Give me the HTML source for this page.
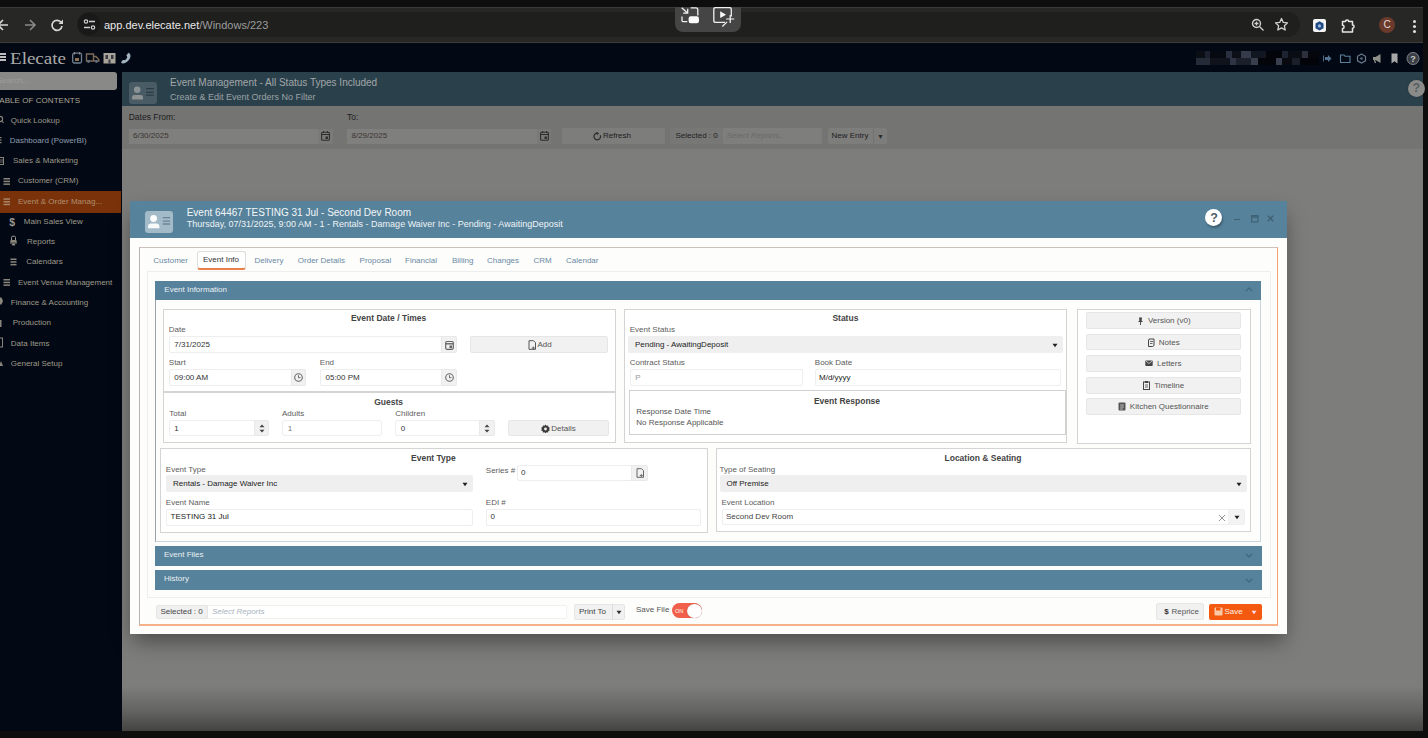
<!DOCTYPE html>
<html><head><meta charset="utf-8">
<style>
*{box-sizing:border-box;margin:0;padding:0}
html,body{width:1428px;height:738px;overflow:hidden;background:#0e0e0e;font-family:"Liberation Sans",sans-serif}
.a{position:absolute}
.t{position:absolute;white-space:nowrap;line-height:1}
/* browser */
#tb{left:0;top:7px;width:1423px;height:36px;background:#272725;border-top:1px solid #3a3a38;border-bottom:1px solid #3d3d38}
#pill{left:77px;top:4px;width:1223px;height:25px;border-radius:13px;background:#1f1f1e}
/* app */
#nav{left:0;top:43px;width:1423px;height:29px;background:#020914}
#side{left:0;top:72px;width:122px;height:659px;background:#020914}
#main{left:122px;top:72px;width:1301px;height:659px;background:linear-gradient(180deg,#7d7d7b 0,#7d7d7b 614px,#626261 640px,#434342 659px)}
#mh{left:0;top:0;width:1301px;height:34px;background:#2a414c}
#fb{left:0;top:34px;width:1301px;height:43px;background:#747473}
.side-i{position:absolute;font-size:8px;color:#9f998b;white-space:nowrap;line-height:1}
/* modal */
#modal{left:130px;top:201px;width:1156px;height:433px;background:#fdfdfc;box-shadow:0 4px 14px rgba(0,0,0,.35)}
#mhd{left:0;top:0;width:1156px;height:37px;background:#5a87a0}
.box{position:absolute;border:1px solid #dcdcdc;background:#fff}
.lbl{position:absolute;font-size:8px;color:#555;white-space:nowrap;line-height:1}
.inp{position:absolute;border:1px solid #e6e6e6;background:#fff;font-size:8px;color:#222;line-height:1}
.sel{position:absolute;background:#efefef;border-radius:2px;font-size:8px;color:#222;line-height:1}
.btn{position:absolute;background:#efefef;border:1px solid #e8e8e8;border-radius:2px;font-size:8px;color:#444;text-align:center;line-height:1}
.ttl{position:absolute;font-size:8.5px;font-weight:bold;color:#444;white-space:nowrap;line-height:1}
.shd{position:absolute;background:#5a87a0;color:#eef3f6;font-size:8px;line-height:1}
</style></head><body>
<div class="a" id="tb">
  <svg class="a" style="left:0;top:5px" width="70" height="24" viewBox="0 0 70 24">
    <path d="M8 12H-1M3 7l-5 5 5 5" stroke="#d6d6d6" stroke-width="1.6" fill="none"/>
    <path d="M25 12h9M30 7l5 5-5 5" stroke="#8a8a8a" stroke-width="1.6" fill="none"/>
    <path d="M61.2 9.5A5 5 0 1 0 62 13" stroke="#d6d6d6" stroke-width="1.7" fill="none"/>
    <path d="M63 6.5v4.5h-4.5z" fill="#d6d6d6"/>
  </svg>
  <div class="a" id="pill">
    <div class="a" style="left:1px;top:1px;width:22px;height:22px;border-radius:11px;background:#191919"></div>
    <svg class="a" style="left:6px;top:6px" width="13" height="13" viewBox="0 0 13 13">
      <circle cx="3" cy="3.5" r="1.7" stroke="#d0d0d0" stroke-width="1.2" fill="none"/>
      <path d="M6 3.5h6M1 9.5h6" stroke="#d0d0d0" stroke-width="1.3"/>
      <circle cx="10" cy="9.5" r="1.7" stroke="#d0d0d0" stroke-width="1.2" fill="none"/>
    </svg>
    <div class="t" style="left:27px;top:8px;font-size:11px;color:#e9e9e9">app.dev.elecate.net<span style="color:#9c9c9c">/Windows/223</span></div>
    <svg class="a" style="left:1174px;top:6px" width="14" height="14" viewBox="0 0 14 14"><circle cx="5.5" cy="5.5" r="4" stroke="#cfcfcf" stroke-width="1.4" fill="none"/><path d="M8.5 8.5l4 4M3.5 5.5h4M5.5 3.5v4" stroke="#cfcfcf" stroke-width="1.3"/></svg>
    <svg class="a" style="left:1197px;top:5px" width="15" height="15" viewBox="0 0 15 15"><path d="M7.5 1.5l1.8 3.9 4.2.5-3.1 2.9.8 4.2-3.7-2.1-3.7 2.1.8-4.2L1.5 5.9l4.2-.5z" stroke="#d2d2d2" stroke-width="1.3" fill="none" stroke-linejoin="round"/></svg>
  </div>
  <div class="a" style="left:1312.5px;top:11px;width:13px;height:13px;background:#f4f4f4;border-radius:2px"><svg class="a" style="left:2px;top:1.5px" width="9" height="10" viewBox="0 0 9 10"><path d="M4.5 0.3l4 2.3v4.6l-4 2.3-4-2.3V2.6z" fill="#1f4a86"/><circle cx="4.5" cy="4.9" r="1.6" fill="#9fb8dc"/></svg></div>
  <svg class="a" style="left:1340px;top:10px" width="16" height="16" viewBox="0 0 16 16"><path d="M2.5 3.5h3a1.6 1.6 0 0 1 3.2 0h3.8v3.5a1.6 1.6 0 0 1 0 3.2v3.8h-10v-3.5a1.6 1.6 0 0 0 0-3.2z" stroke="#e6e6e6" stroke-width="1.5" fill="none" stroke-linejoin="round"/></svg>
  <div class="a" style="left:1379px;top:9px;width:16px;height:16px;border-radius:8px;background:#6a3a2c;color:#e8dcd6;font-size:10px;text-align:center;line-height:16px">C</div>
  <div class="a" style="left:1412.5px;top:12px;width:3px;height:3px;border-radius:2px;background:#e0e0e0;box-shadow:0 5px 0 #e0e0e0,0 10px 0 #e0e0e0"></div>
</div>
<div class="a" style="left:675px;top:6.5px;width:66px;height:25.5px;background:#454545;border-radius:0 0 8px 8px">
  <svg class="a" style="left:0;top:0" width="66" height="25" viewBox="0 0 66 25">
    <path d="M6.7 0.8L12.5 6M8.2 6.2h4.5V1.8" stroke="#f0f0f0" stroke-width="1.3" fill="none"/>
    <path d="M15.7 0.8h5.3q1.8 0 1.8 1.8v6" stroke="#f0f0f0" stroke-width="1.3" fill="none"/>
    <path d="M7 9.6v4.2q0 .8.8.8h4.5" stroke="#f0f0f0" stroke-width="1.3" fill="none"/>
    <rect x="13.6" y="9.2" width="10.4" height="7" rx="2.2" fill="#fafafa"/>
    <path d="M50 15.4h-9.2q-2 0-2-2V2.5q0-2 2-2h13.5q2 0 2 2v7" stroke="#f0f0f0" stroke-width="1.3" fill="none"/>
    <path d="M45.2 4.3v6.8l5.8-3.4z" fill="#fafafa"/>
    <path d="M55.2 8v8M51.2 12h8" stroke="#fafafa" stroke-width="1.2"/>
    <path d="M47.3 19.5l4.8-4.6" stroke="#f0f0f0" stroke-width="1.2"/>
  </svg>
</div>
<div class="a" id="nav">
  <div class="a" style="left:0;top:10px;width:6px;height:1.6px;background:#bdbdbd;box-shadow:0 3px 0 #bdbdbd,0 6px 0 #bdbdbd"></div>
  <div class="t" style="left:10px;top:8.2px;font-family:'Liberation Serif',serif;font-size:16px;color:#aaaaa8;transform:scaleX(1.19);transform-origin:0 0">Elecate</div>
  <svg class="a" style="left:72px;top:8.5px" width="60" height="12" viewBox="0 0 60 12">
    <rect x="0.7" y="1.2" width="8.8" height="9.8" rx="1.5" stroke="#6f7f8f" stroke-width="1.3" fill="none"/><path d="M2.5 0v2.5M7.5 0v2.5" stroke="#8a8a8a" stroke-width="1.2"/><rect x="3" y="6" width="4" height="3" fill="#8a7050"/>
    <path d="M14.5 2h7v7h-7zM21.5 4.5h2.5l2.8 3v1.5h-5.3" stroke="#7d6a58" stroke-width="1.4" fill="none"/><circle cx="16.5" cy="9.5" r="1.4" fill="#607080"/><circle cx="24.5" cy="9.5" r="1.4" fill="#607080"/>
    <path d="M31.5 1h12v10.5h-12z" fill="#a9a39a"/><path d="M33.5 3h2.5v4h-2.5zM39 3h2.5v4H39zM36.5 7.5h2v4h-2z" fill="#3a3c44"/>
    <path d="M56.5 0.8c1.8.6 2.6 2.8 1.6 5.2-1.3 3-4.3 5.3-7 5.5-1.2.1-2.3-.7-1.8-1.7l1.4-1.6c.8-.5 1.6.1 2.2-.1.9-.5 2-1.9 2.3-2.9.2-.7-.7-1.2-.8-2z" fill="#a3b2c0"/>
  </svg>
  <div class="a" style="left:1196px;top:8px;width:123px;height:14px;background:
    linear-gradient(90deg,#0b0e14 0 9px,#1c2230 9px 14px,#070910 14px 30px,#2a3040 30px 36px,#0c0f16 36px 45px,#353b4a 45px 55px,#121620 55px 70px,#03050a 70px 86px,#1e2330 86px 92px,#0a0d14 92px 106px,#2b303c 106px 112px,#05070c 112px 123px)"></div>
  <div class="a" style="left:1196px;top:15px;width:123px;height:7px;background:
    linear-gradient(90deg,#262b38 0 14px,#10131b 14px 34px,#2e3444 34px 40px,#1a1f2a 40px 55px,#383e4c 55px 62px,#03050a 62px 80px,#3a4050 80px 86px,#080a10 86px 96px,#1a1e28 96px 104px,#02040a 104px 123px)"></div>
  <svg class="a" style="left:1322px;top:8px" width="101" height="15" viewBox="0 0 101 15">
    <path d="M3 6h3V4l3.5 3.5L6 11V9H3z" fill="#55738e"/><path d="M1.5 4.5v6" stroke="#4d6a84" stroke-width="1"/>
    <path d="M18.5 4h3.5l1 1.2h5v6.3h-9.5z" stroke="#5f7f9a" stroke-width="1.1" fill="none"/>
    <path d="M39.5 3l4 2.3v4.5l-4 2.3-4-2.3V5.3z" stroke="#66788a" stroke-width="1.2" fill="none"/><circle cx="39.5" cy="7.5" r="1.3" fill="#5a6a80"/>
    <path d="M51 6h2.5l5-3v9l-5-3H51z" fill="#8f8f8a"/><path d="M52.5 9l1 3" stroke="#8f8f8a" stroke-width="1.3"/>
    <path d="M69.5 2.5h6v10l-3-2.3-3 2.3z" fill="#a8a8a8"/>
    <circle cx="91" cy="7.5" r="6" fill="#3a3e44" stroke="#7f8288" stroke-width="1"/><text x="91" y="11" font-family="Liberation Sans" font-size="9" font-weight="bold" fill="#c8c8c8" text-anchor="middle">?</text>
  </svg>
</div>
<div class="a" id="side">
  <div class="a" style="left:-4px;top:0;width:120.5px;height:17.5px;background:#898987;border-radius:3px"></div>
  <div class="t" style="left:-3px;top:4.5px;font-size:8px;color:#9f9f9c">Search...</div>
  <div class="t" style="left:-5px;top:24.5px;font-size:8px;color:#aca594;letter-spacing:0.05px">TABLE OF CONTENTS</div>
  <div class="a" style="left:0;top:119px;width:121px;height:21.5px;background:#7a320b"></div>
  <div class="side-i" style="left:10.7px;top:44.5px">Quick Lookup</div>
  <div class="side-i" style="left:9.7px;top:64.5px;color:#8d9db0">Dashboard (PowerBI)</div>
  <div class="side-i" style="left:13px;top:85px">Sales &amp; Marketing</div>
  <div class="side-i" style="left:18px;top:105px">Customer (CRM)</div>
  <div class="side-i" style="left:18px;top:125.5px;color:#b08f6e">Event &amp; Order Manag...</div>
  <div class="side-i" style="left:23.8px;top:145.5px">Main Sales View</div>
  <div class="side-i" style="left:27px;top:166px">Reports</div>
  <div class="side-i" style="left:26.3px;top:186px">Calendars</div>
  <div class="side-i" style="left:18px;top:206.5px">Event Venue Management</div>
  <div class="side-i" style="left:10.8px;top:227px">Finance &amp; Accounting</div>
  <div class="side-i" style="left:12.7px;top:247px">Production</div>
  <div class="side-i" style="left:10.8px;top:267.5px">Data Items</div>
  <div class="side-i" style="left:10.8px;top:288px">General Setup</div>
  <svg class="a" style="left:0;top:40px" width="30" height="260" viewBox="0 0 30 260">
    <g fill="#8a867c">
    <circle cx="0" cy="7" r="2.6" fill="none" stroke="#8a867c" stroke-width="1.1"/><path d="M1.8 9l1.8 2" stroke="#8a867c" stroke-width="1.1"/>
    <rect x="-1" y="25" width="2.5" height="1.2"/><rect x="-1" y="27.5" width="2.5" height="1.2"/><rect x="-1" y="30" width="2.5" height="1.2"/>
    <rect x="-1" y="45.5" width="4.5" height="7" fill="none" stroke="#8a867c" stroke-width="1"/><path d="M0 48h3M0 50h3" stroke="#8a867c" stroke-width=".8"/>
    <rect x="3.5" y="66" width="6.5" height="1.5"/><rect x="3.5" y="68.7" width="6.5" height="1.5"/><rect x="3.5" y="71.4" width="6.5" height="1.5"/>
    <rect x="3.5" y="86.3" width="6.5" height="1.5" fill="#a88466"/><rect x="3.5" y="89" width="6.5" height="1.5" fill="#a88466"/><rect x="3.5" y="91.7" width="6.5" height="1.5" fill="#a88466"/>
    <text x="9.3" y="113.5" font-family="Liberation Sans" font-size="10.5" font-weight="bold" fill="#9a9890">$</text>
    <path d="M11.5 128v-2.5q0-1.3 1.3-1.3h1.4q1.3 0 1.3 1.3V128" fill="none" stroke="#9a9890" stroke-width="1"/><rect x="10.3" y="128" width="6.4" height="4" rx="1"/><rect x="11.8" y="131" width="3.4" height="2.8" fill="#9a9890" stroke="#020914" stroke-width=".6"/>
    <rect x="10.5" y="146.5" width="6" height="1.5"/><rect x="10.5" y="149.2" width="6" height="1.5"/><rect x="10.5" y="151.9" width="6" height="1.5"/>
    <rect x="3.5" y="167" width="6.5" height="1.5"/><rect x="3.5" y="169.7" width="6.5" height="1.5"/><rect x="3.5" y="172.4" width="6.5" height="1.5"/>
    <path d="M-1 185.5h2.5l1.5 3.5-1.5 3.5H-1z"/>
    <rect x="-1" y="208" width="2.5" height="7"/>
    <rect x="-1" y="226" width="3.5" height="9" fill="none" stroke="#8a867c" stroke-width="1"/>
    <path d="M-1 254l2-5 2 5z"/>
    </g>
  </svg>
</div>
<div class="a" id="main">
  <div class="a" id="mh">
    <div class="a" style="left:6.6px;top:9.9px;width:28px;height:21.8px;background:#495b65;border-radius:3px"></div>
    <svg class="a" style="left:8px;top:12px" width="26" height="18" viewBox="0 0 26 18"><circle cx="7.2" cy="5.7" r="3.3" fill="#8a9296"/><path d="M2 15.4v-2.2q0-2.3 2.3-2.3h6.4q2.3 0 2.3 2.3v2.2z" fill="#8e9392"/><path d="M16 4.7h7.7M16 8.3h7.7M16 11.1h7.7" stroke="#2b3b43" stroke-width="1.3"/></svg>
    <div class="t" style="left:48px;top:6.2px;font-size:10px;color:#a2a6a8">Event Management - All Status Types Included</div>
    <div class="t" style="left:48px;top:20.7px;font-size:9px;color:#9ca1a4">Create &amp; Edit Event Orders No Filter</div>
    <div class="a" style="left:1286px;top:8px;width:16.5px;height:16.5px;border-radius:9px;background:#8b8c8a;color:#565d62;font-size:12.5px;font-weight:bold;text-align:center;line-height:17px;box-shadow:0 0 2px rgba(0,0,0,.3)">?</div>
  </div>
  <div class="a" id="fb">
    <div class="t" style="left:6.7px;top:7.1px;font-size:8.5px;color:#1c1c1c">Dates From:</div>
    <div class="t" style="left:225px;top:7.1px;font-size:8.5px;color:#1c1c1c">To:</div>
    <div class="a" style="left:6.7px;top:22.5px;width:204px;height:15px;background:#7f7f7e"></div>
    <div class="t" style="left:11px;top:26px;font-size:8px;color:#3c3530">6/30/2025</div>
    <div class="a" style="left:196px;top:22.5px;width:14.5px;height:15px;background:#7a7a79"></div>
    <div class="a" style="left:225px;top:22.5px;width:204px;height:15px;background:#7f7f7e"></div>
    <div class="t" style="left:229.5px;top:26px;font-size:8px;color:#3c3530">8/29/2025</div>
    <div class="a" style="left:414.5px;top:22.5px;width:14.5px;height:15px;background:#7a7a79"></div>
    <svg class="a" style="left:199px;top:25px" width="9" height="10" viewBox="0 0 9 10"><rect x="0.6" y="1.2" width="7.8" height="8" rx="1" fill="none" stroke="#2e2e2e" stroke-width="1.1"/><path d="M0.6 3.5h7.8" stroke="#2e2e2e" stroke-width="1"/><path d="M2.5 0v2M6.5 0v2" stroke="#2e2e2e" stroke-width="1"/><rect x="4.5" y="5.5" width="2.5" height="2.5" fill="#2e2e2e"/></svg>
    <svg class="a" style="left:417.5px;top:25px" width="9" height="10" viewBox="0 0 9 10"><rect x="0.6" y="1.2" width="7.8" height="8" rx="1" fill="none" stroke="#2e2e2e" stroke-width="1.1"/><path d="M0.6 3.5h7.8" stroke="#2e2e2e" stroke-width="1"/><path d="M2.5 0v2M6.5 0v2" stroke="#2e2e2e" stroke-width="1"/><rect x="4.5" y="5.5" width="2.5" height="2.5" fill="#2e2e2e"/></svg>
    <div class="a" style="left:439.5px;top:22px;width:103.5px;height:15.5px;background:#7d7d7c;border-radius:2px"></div>
    <svg class="a" style="left:471px;top:25.5px" width="9" height="9" viewBox="0 0 9 9"><path d="M7.3 3.2A3.3 3.3 0 1 1 4.5 1.2" stroke="#2a2a2a" stroke-width="1.2" fill="none"/><path d="M3.5 0l2.5 1.3-2 2z" fill="#2a2a2a"/></svg>
    <div class="t" style="left:481px;top:26px;font-size:8px;color:#202020">Refresh</div>
    <div class="a" style="left:548px;top:22px;width:152px;height:15.5px;background:#7e7e7d;border-radius:2px"></div>
    <div class="a" style="left:548px;top:22px;width:52.5px;height:15.5px;background:#777776;border-radius:2px 0 0 2px"></div>
    <div class="t" style="left:553.5px;top:26px;font-size:8px;color:#222">Selected : 0</div>
    <div class="t" style="left:604.5px;top:26px;font-size:8px;color:#6a6a6a;font-style:italic">Select Reports...</div>
    <div class="a" style="left:706px;top:22px;width:59px;height:15.5px;background:#7d7d7c;border-radius:2px"></div>
    <div class="a" style="left:750.5px;top:22px;width:1px;height:15.5px;background:#727271"></div>
    <div class="t" style="left:709.5px;top:26px;font-size:8px;color:#202020">New Entry</div>
    <div class="t" style="left:755px;top:26.5px;font-size:7px;color:#2c2c2c">&#9660;</div>
  </div>
</div>
<!--MODAL-->
<div class="a" style="left:130px;top:200.6px;width:1156.5px;height:433.2px;background:#fdfdfc;box-shadow:0 10px 20px -3px rgba(0,0,0,.42)"></div>
<div class="a" style="left:130px;top:200.6px;width:1156.5px;height:37.4px;background:#56829b"></div>
<div class="a" style="left:145.2px;top:210.9px;width:28.2px;height:22.1px;background:#a3bac8;border-radius:3px"></div>
<svg class="a" style="left:146px;top:213px" width="26" height="18" viewBox="0 0 26 18"><circle cx="7.6" cy="5.5" r="3.4" fill="#fbfcfc"/><path d="M2 15.2v-1.6q0-3 3-3h5.4q3 0 3 3v1.6z" fill="#f6fafb"/><path d="M16.8 4.6h7.3M16.8 8.1h7.3M16.8 11h7.3" stroke="#6a8595" stroke-width="1.3"/></svg>
<div class="t" style="left:186.7px;top:207.53px;font-size:10px;color:#f4f7f9;">Event 64467 TESTING 31 Jul - Second Dev Room</div>
<div class="t" style="left:186.7px;top:219.98px;font-size:9px;color:#eef3f6;">Thursday, 07/31/2025, 9:00 AM - 1 - Rentals - Damage Waiver Inc - Pending - AwaitingDeposit</div>
<div class="a" style="left:1205.3px;top:209.3px;width:17.0px;height:17.0px;background:#fff;border-radius:50%;box-shadow:1px 2px 2px rgba(0,0,0,.3);color:#4d6f85;font-size:13px;font-weight:bold;text-align:center;line-height:17px"></div>
<div class="t" style="left:1210.2px;top:212.42px;font-size:12.5px;color:#4f5e68;font-weight:bold">?</div>
<div class="a" style="left:1233.5px;top:219px;width:6.5px;height:1.3px;background:#3f5f72"></div>
<svg class="a" style="left:1251px;top:215px" width="8" height="8" viewBox="0 0 8 8"><rect x="0.6" y="0.6" width="6.4" height="6.4" fill="none" stroke="#3f5f72" stroke-width="1.1"/><path d="M0.6 2h6.4" stroke="#3f5f72" stroke-width="1.4"/></svg>
<svg class="a" style="left:1267.3px;top:215.3px" width="7" height="7" viewBox="0 0 7 7"><path d="M0.8 0.8l5.4 5.4M6.2 0.8L0.8 6.2" stroke="#3f5f72" stroke-width="1.3"/></svg>
<div class="a" style="left:138.5px;top:246.5px;width:1139.5px;height:379.5px;border:1px solid #cdbfba;border-left-color:#b8b2b0;border-right-color:#f7a070;border-bottom:2px solid #f7b088"></div>
<div class="t" style="left:153.3px;top:256.73px;font-size:8px;color:#6a89a3;">Customer</div>
<div class="t" style="left:254.5px;top:256.73px;font-size:8px;color:#6a89a3;">Delivery</div>
<div class="t" style="left:297.8px;top:256.73px;font-size:8px;color:#6a89a3;">Order Details</div>
<div class="t" style="left:359.6px;top:256.73px;font-size:8px;color:#6a89a3;">Proposal</div>
<div class="t" style="left:405px;top:256.73px;font-size:8px;color:#6a89a3;">Financial</div>
<div class="t" style="left:452px;top:256.73px;font-size:8px;color:#6a89a3;">Billing</div>
<div class="t" style="left:487px;top:256.73px;font-size:8px;color:#6a89a3;">Changes</div>
<div class="t" style="left:533.5px;top:256.73px;font-size:8px;color:#6a89a3;">CRM</div>
<div class="t" style="left:566px;top:256.73px;font-size:8px;color:#6a89a3;">Calendar</div>
<div class="a" style="left:196.5px;top:250.8px;width:49.5px;height:19.7px;border:1px solid #dedede;border-bottom:2px solid #e8804a;border-radius:3px;background:#fff"></div>
<div class="t" style="left:203px;top:255.73px;font-size:8px;color:#333;">Event Info</div>
<div class="a" style="left:147px;top:270.8px;width:1124px;height:327.7px;border:1px solid #eeeeee"></div>
<div class="a" style="left:155.2px;top:280.5px;width:1106.2px;height:19.1px;background:#56829b"></div>
<div class="t" style="left:164.3px;top:286.03px;font-size:8px;color:#eaf0f4;">Event Information</div>
<svg class="a" style="left:1244.5px;top:287px" width="8" height="5" viewBox="0 0 8 5"><path d="M0.8 4.2L4 1l3.2 3.2" stroke="#3f657b" stroke-width="1.1" fill="none"/></svg>
<div class="a" style="left:155.2px;top:299.5px;width:1106.2px;height:242.3px;border:1px solid #c8d6df;border-top:none;border-left-color:#9aa3a8"></div>
<div class="a" style="left:162.5px;top:309px;width:453.0px;height:83px;border:1.5px solid #d4d4d4;background:#fff"></div>
<div class="t" style="left:188.60000000000002px;width:400px;text-align:center;top:314.0px;font-size:8.5px;color:#444;font-weight:bold">Event Date / Times</div>
<div class="t" style="left:168.8px;top:325.83px;font-size:8px;color:#5c5c5c;">Date</div>
<div class="a" style="left:168.8px;top:336.3px;width:288.2px;height:16.4px;border:1px solid #eeeeee;border-radius:2px;background:#fff"></div>
<div class="t" style="left:174.3px;top:340.83px;font-size:8px;color:#333;">7/31/2025</div>
<div class="a" style="left:441.3px;top:336.3px;width:15.7px;height:16.4px;background:#f1f1f1;border:1px solid #e9e9e9;border-radius:0 2px 2px 0"></div>
<svg class="a" style="left:445px;top:339.5px" width="9" height="10" viewBox="0 0 9 10"><rect x="0.7" y="1.5" width="7.6" height="7.8" rx="1.2" fill="none" stroke="#666" stroke-width="1.2"/><path d="M0.7 3.8h7.6" stroke="#666" stroke-width="1.4"/><rect x="4.5" y="5.5" width="2.6" height="2.6" fill="#666"/></svg>
<div class="a" style="left:470.3px;top:336.3px;width:138.2px;height:16.4px;background:#f1f1f1;border:1px solid #e6e6e6;border-radius:2px"></div>
<svg class="a" style="left:527.5px;top:339.5px" width="9" height="10" viewBox="0 0 9 10"><path d="M1 0.7h4.5L7.5 2.7v6.6H1z" fill="none" stroke="#555" stroke-width="1"/><path d="M5.3 6.5v3M3.8 8h3" stroke="#555" stroke-width="0.9"/></svg>
<div class="t" style="left:537.5px;top:341.03px;font-size:8px;color:#555;">Add</div>
<div class="t" style="left:168.8px;top:358.63px;font-size:8px;color:#5c5c5c;">Start</div>
<div class="t" style="left:319.8px;top:358.63px;font-size:8px;color:#5c5c5c;">End</div>
<div class="a" style="left:168.8px;top:369px;width:137.6px;height:16.6px;border:1px solid #eeeeee;border-radius:2px;background:#fff"></div>
<div class="t" style="left:174.3px;top:373.53px;font-size:8px;color:#333;">09:00 AM</div>
<div class="a" style="left:290.5px;top:369px;width:15.9px;height:16.6px;background:#f1f1f1;border:1px solid #e9e9e9;border-radius:0 2px 2px 0"></div>
<svg class="a" style="left:294px;top:372.8px" width="9" height="9" viewBox="0 0 9 9"><circle cx="4.5" cy="4.5" r="3.8" fill="none" stroke="#6a6a6a" stroke-width="1.1"/><path d="M4.5 2.3v2.4h2" stroke="#6a6a6a" stroke-width="1" fill="none"/></svg>
<div class="a" style="left:320px;top:369px;width:137px;height:16.6px;border:1px solid #eeeeee;border-radius:2px;background:#fff"></div>
<div class="t" style="left:325.5px;top:373.53px;font-size:8px;color:#333;">05:00 PM</div>
<div class="a" style="left:441.3px;top:369px;width:15.7px;height:16.6px;background:#f1f1f1;border:1px solid #e9e9e9;border-radius:0 2px 2px 0"></div>
<svg class="a" style="left:445px;top:372.8px" width="9" height="9" viewBox="0 0 9 9"><circle cx="4.5" cy="4.5" r="3.8" fill="none" stroke="#6a6a6a" stroke-width="1.1"/><path d="M4.5 2.3v2.4h2" stroke="#6a6a6a" stroke-width="1" fill="none"/></svg>
<div class="a" style="left:162.5px;top:392px;width:453.0px;height:51.2px;border:1.5px solid #d4d4d4;background:#fff"></div>
<div class="t" style="left:188.60000000000002px;width:400px;text-align:center;top:398.4px;font-size:8.5px;color:#444;font-weight:bold">Guests</div>
<div class="t" style="left:169.3px;top:410.13px;font-size:8px;color:#5c5c5c;">Total</div>
<div class="t" style="left:282px;top:410.13px;font-size:8px;color:#5c5c5c;">Adults</div>
<div class="t" style="left:395.3px;top:410.13px;font-size:8px;color:#5c5c5c;">Children</div>
<div class="a" style="left:168.7px;top:420px;width:100.5px;height:16px;border:1px solid #eeeeee;border-radius:2px;background:#fff"></div>
<div class="t" style="left:174.2px;top:424.53px;font-size:8px;color:#333;">1</div>
<div class="a" style="left:253.7px;top:420px;width:15.5px;height:16px;background:#f1f1f1;border:1px solid #e9e9e9;border-radius:0 2px 2px 0"></div>
<svg class="a" style="left:258.5px;top:423.8px" width="6" height="9" viewBox="0 0 6 9"><path d="M0.5 3.2L3 0.5l2.5 2.7zM0.5 5.8L3 8.5l2.5-2.7z" fill="#444"/></svg>
<div class="a" style="left:282.3px;top:420px;width:99.7px;height:16px;border:1px solid #eeeeee;border-radius:2px;background:#fff"></div>
<div class="t" style="left:287.8px;top:424.53px;font-size:8px;color:#777;">1</div>
<div class="a" style="left:395.2px;top:420px;width:99.8px;height:16px;border:1px solid #eeeeee;border-radius:2px;background:#fff"></div>
<div class="t" style="left:400.7px;top:424.53px;font-size:8px;color:#333;">0</div>
<div class="a" style="left:479px;top:420px;width:16px;height:16px;background:#f1f1f1;border:1px solid #e9e9e9;border-radius:0 2px 2px 0"></div>
<svg class="a" style="left:484px;top:423.8px" width="6" height="9" viewBox="0 0 6 9"><path d="M0.5 3.2L3 0.5l2.5 2.7zM0.5 5.8L3 8.5l2.5-2.7z" fill="#444"/></svg>
<div class="a" style="left:508px;top:420px;width:100.5px;height:16px;background:#f1f1f1;border:1px solid #e6e6e6;border-radius:2px"></div>
<svg class="a" style="left:540.5px;top:423.5px" width="9" height="9" viewBox="0 0 9 9"><path d="M4.5 0.5l1 1.3 1.6-.4.3 1.6 1.5.7-.8 1.3.8 1.3-1.5.7-.3 1.6-1.6-.4-1 1.3-1-1.3-1.6.4-.3-1.6L.1 6.3.9 5 .1 3.7l1.5-.7.3-1.6 1.6.4z" fill="#3a3a3a"/><circle cx="4.5" cy="5" r="1.4" fill="#f1f1f1"/></svg>
<div class="t" style="left:551.3px;top:424.53px;font-size:8px;color:#555;">Details</div>
<div class="a" style="left:623.8px;top:309px;width:443.7px;height:134px;border:1.5px solid #d4d4d4;background:#fff"></div>
<div class="t" style="left:645.4px;width:400px;text-align:center;top:314.0px;font-size:8.5px;color:#444;font-weight:bold">Status</div>
<div class="t" style="left:629.7px;top:325.83px;font-size:8px;color:#5c5c5c;">Event Status</div>
<div class="a" style="left:628px;top:336.3px;width:435px;height:16.4px;background:#efefef;border-radius:2px"></div>
<div class="t" style="left:635px;top:341.13px;font-size:8px;color:#222;">Pending - AwaitingDeposit</div>
<svg class="a" style="left:1052.2px;top:342.8px" width="6" height="5" viewBox="0 0 6 5"><path d="M0.5 0.8h5L3 4.2z" fill="#222"/></svg>
<div class="t" style="left:629.7px;top:358.63px;font-size:8px;color:#5c5c5c;">Contract Status</div>
<div class="t" style="left:814.8px;top:358.63px;font-size:8px;color:#5c5c5c;">Book Date</div>
<div class="a" style="left:629.7px;top:369px;width:172.9px;height:16.6px;border:1px solid #eeeeee;border-radius:2px;background:#fff"></div>
<div class="t" style="left:635.2px;top:373.53px;font-size:8px;color:#999;">P</div>
<div class="a" style="left:815.4px;top:369px;width:245.6px;height:16.6px;border:1px solid #eeeeee;border-radius:2px;background:#fff"></div>
<div class="t" style="left:819px;top:373.53px;font-size:8px;color:#222;">M/d/yyyy</div>
<div class="a" style="left:629px;top:390px;width:436.5px;height:45.3px;border:1.2px solid #d0d0d0;background:#fff"></div>
<div class="t" style="left:647px;width:400px;text-align:center;top:396.7px;font-size:8.5px;color:#444;font-weight:bold">Event Response</div>
<div class="t" style="left:636.3px;top:407.53px;font-size:8px;color:#555;">Response Date Time</div>
<div class="t" style="left:636.3px;top:419.03px;font-size:8px;color:#555;">No Response Applicable</div>
<div class="a" style="left:1076.6px;top:308.8px;width:174.2px;height:134.8px;border:1.5px solid #d4d4d4;background:#fff"></div>
<div class="a" style="left:1086px;top:312.3px;width:154.5px;height:16.7px;background:#f1f1f1;border:1px solid #e6e6e6;border-radius:2px"></div>
<svg class="a" style="left:1136.8828125px;top:316.6px" width="7" height="8" viewBox="0 0 7 8"><path d="M2 0.5h3L4.6 3.5l1.4 1.5H1l1.4-1.5z" fill="#444"/><path d="M3.5 5v3" stroke="#444" stroke-width="0.9"/></svg>
<div class="t" style="left:1147.88px;top:317.13px;font-size:8px;color:#555;">Version (v0)</div>
<div class="a" style="left:1086px;top:334.2px;width:154.5px;height:16.3px;background:#f1f1f1;border:1px solid #e6e6e6;border-radius:2px"></div>
<svg class="a" style="left:1146.796875px;top:338.0px" width="8" height="9" viewBox="0 0 8 9"><path d="M2 1h5v6.5l-1.5 1H1.5V3z" fill="none" stroke="#444" stroke-width="1"/><path d="M3 3.5h3M3 5.5h2.5" stroke="#444" stroke-width="0.8"/></svg>
<div class="t" style="left:1158.8px;top:339.03px;font-size:8px;color:#555;">Notes</div>
<div class="a" style="left:1086px;top:355.1px;width:154.5px;height:16.6px;background:#f1f1f1;border:1px solid #e6e6e6;border-radius:2px"></div>
<svg class="a" style="left:1145.015625px;top:360.40000000000003px" width="8" height="7" viewBox="0 0 8 7"><rect x="0.3" y="0.5" width="7.4" height="5.5" rx="0.8" fill="#444"/><path d="M0.8 1l3.2 2.5L7.2 1" stroke="#ddd" stroke-width="0.8" fill="none"/></svg>
<div class="t" style="left:1157.02px;top:359.93px;font-size:8px;color:#555;">Letters</div>
<div class="a" style="left:1086px;top:376.8px;width:154.5px;height:16.8px;background:#f1f1f1;border:1px solid #e6e6e6;border-radius:2px"></div>
<svg class="a" style="left:1142.765625px;top:380.6px" width="7" height="9" viewBox="0 0 7 9"><rect x="0.5" y="1" width="6" height="7.5" fill="none" stroke="#444" stroke-width="1"/><rect x="2" y="0" width="3" height="2" fill="#444"/><path d="M2 4h3M2 6h3" stroke="#444" stroke-width="0.8"/></svg>
<div class="t" style="left:1154.27px;top:381.63px;font-size:8px;color:#555;">Timeline</div>
<div class="a" style="left:1086px;top:398px;width:154.5px;height:16.8px;background:#f1f1f1;border:1px solid #e6e6e6;border-radius:2px"></div>
<svg class="a" style="left:1117.8671875px;top:401.8px" width="8" height="9" viewBox="0 0 8 9"><rect x="0.5" y="0.5" width="7" height="8" rx="1" fill="#555"/><path d="M2.2 3h3.6M2.2 5h3.6M2.2 7h2.5" stroke="#ddd" stroke-width="0.8"/></svg>
<div class="t" style="left:1129.87px;top:402.83px;font-size:8px;color:#555;">Kitchen Questionnaire</div>
<div class="a" style="left:160px;top:448.2px;width:547.7px;height:84.4px;border:1.5px solid #d4d4d4;background:#fff"></div>
<div class="t" style="left:233.39999999999998px;width:400px;text-align:center;top:454.4px;font-size:8.5px;color:#444;font-weight:bold">Event Type</div>
<div class="t" style="left:165.8px;top:465.83px;font-size:8px;color:#5c5c5c;">Event Type</div>
<div class="a" style="left:166px;top:475px;width:306.5px;height:17px;background:#efefef;border-radius:2px"></div>
<div class="t" style="left:173px;top:479.83px;font-size:8px;color:#222;">Rentals - Damage Waiver Inc</div>
<svg class="a" style="left:461.6px;top:481.5px" width="6" height="5" viewBox="0 0 6 5"><path d="M0.5 0.8h5L3 4.2z" fill="#222"/></svg>
<div class="t" style="left:485.8px;top:467.33px;font-size:8px;color:#5c5c5c;">Series #</div>
<div class="a" style="left:516.5px;top:464.7px;width:131.5px;height:16.8px;border:1px solid #eeeeee;border-radius:2px;background:#fff"></div>
<div class="t" style="left:521px;top:469.23px;font-size:8px;color:#333;">0</div>
<div class="a" style="left:631px;top:464.7px;width:17px;height:16.8px;background:#f1f1f1;border:1px solid #e9e9e9;border-radius:0 2px 2px 0"></div>
<svg class="a" style="left:635.5px;top:468px" width="9" height="10" viewBox="0 0 9 10"><path d="M1 0.7h4.5L7.5 2.7v6.6H1z" fill="none" stroke="#666" stroke-width="1"/><path d="M5.3 6v3M3.8 7.5h3" stroke="#666" stroke-width="0.9"/></svg>
<div class="t" style="left:165.8px;top:499.03px;font-size:8px;color:#5c5c5c;">Event Name</div>
<div class="a" style="left:166px;top:508.7px;width:306.5px;height:17.1px;border:1px solid #eeeeee;border-radius:2px;background:#fff"></div>
<div class="t" style="left:170.5px;top:513.23px;font-size:8px;color:#222;">TESTING 31 Jul</div>
<div class="t" style="left:485.8px;top:499.03px;font-size:8px;color:#5c5c5c;">EDI #</div>
<div class="a" style="left:486px;top:508.7px;width:215px;height:17.1px;border:1px solid #eeeeee;border-radius:2px;background:#fff"></div>
<div class="t" style="left:490.5px;top:513.23px;font-size:8px;color:#333;">0</div>
<div class="a" style="left:716.2px;top:448.2px;width:534.6px;height:83.8px;border:1.5px solid #d4d4d4;background:#fff"></div>
<div class="t" style="left:783px;width:400px;text-align:center;top:454.2px;font-size:8.5px;color:#444;font-weight:bold">Location &amp; Seating</div>
<div class="t" style="left:719.5px;top:465.63px;font-size:8px;color:#5c5c5c;">Type of Seating</div>
<div class="a" style="left:719.5px;top:475px;width:527.1px;height:16.8px;background:#efefef;border-radius:2px"></div>
<div class="t" style="left:726.5px;top:479.83px;font-size:8px;color:#222;">Off Premise</div>
<svg class="a" style="left:1236px;top:481.5px" width="6" height="5" viewBox="0 0 6 5"><path d="M0.5 0.8h5L3 4.2z" fill="#222"/></svg>
<div class="t" style="left:721.5px;top:499.03px;font-size:8px;color:#5c5c5c;">Event Location</div>
<div class="a" style="left:721.5px;top:508.7px;width:523.5px;height:16.5px;border:1px solid #eeeeee;border-radius:2px;background:#fff"></div>
<div class="t" style="left:726px;top:513.23px;font-size:8px;color:#444;">Second Dev Room</div>
<div class="a" style="left:1228.3px;top:509.5px;width:15.9px;height:14.9px;background:#f3f3f3"></div>
<svg class="a" style="left:1217.5px;top:513.5px" width="8" height="8" viewBox="0 0 8 8"><path d="M1 1l6 6M7 1L1 7" stroke="#888" stroke-width="0.9"/></svg>
<svg class="a" style="left:1233.6px;top:514.8px" width="6" height="5" viewBox="0 0 6 5"><path d="M0.5 0.8h5L3 4.2z" fill="#222"/></svg>
<div class="a" style="left:155px;top:546px;width:1106.5px;height:19.6px;background:#56829b"></div>
<div class="t" style="left:164px;top:550.73px;font-size:8px;color:#eaf0f4;">Event Files</div>
<svg class="a" style="left:1244.5px;top:553px" width="8" height="5" viewBox="0 0 8 5"><path d="M0.8 0.8L4 4l3.2-3.2" stroke="#3f657b" stroke-width="1.1" fill="none"/></svg>
<div class="a" style="left:155px;top:569.8px;width:1106.5px;height:20.2px;background:#56829b"></div>
<div class="t" style="left:164px;top:575.23px;font-size:8px;color:#eaf0f4;">History</div>
<svg class="a" style="left:1244.5px;top:577.5px" width="8" height="5" viewBox="0 0 8 5"><path d="M0.8 0.8L4 4l3.2-3.2" stroke="#3f657b" stroke-width="1.1" fill="none"/></svg>
<div class="a" style="left:155.7px;top:604.5px;width:411.8px;height:14.5px;border:1px solid #f0f0f0;border-radius:2px;background:#fff"></div>
<div class="a" style="left:155.5px;top:605px;width:52.1px;height:13.5px;background:#f0f0f0;border:1px solid #e6e6e6;border-radius:2px"></div>
<div class="t" style="left:160.5px;top:608.23px;font-size:8px;color:#444;">Selected : 0</div>
<div class="t" style="left:212px;top:608.23px;font-size:8px;color:#a8b4c0;font-style:italic">Select Reports</div>
<div class="a" style="left:574.2px;top:603.5px;width:51.3px;height:16.5px;background:#f1f1f1;border:1px solid #e6e6e6;border-radius:2px"></div>
<div class="a" style="left:612px;top:604px;width:1px;height:15.5px;background:#dcdcdc"></div>
<div class="t" style="left:579px;top:608.23px;font-size:8px;color:#444;">Print To</div>
<svg class="a" style="left:615.6px;top:609.5px" width="6" height="5" viewBox="0 0 6 5"><path d="M0.5 0.8h5L3 4.2z" fill="#333"/></svg>
<div class="t" style="left:636px;top:606.23px;font-size:8px;color:#555;">Save File</div>
<div class="a" style="left:671.7px;top:603.3px;width:30.6px;height:15.2px;background:#f0604a;border-radius:8px"></div>
<div class="t" style="left:675px;top:608.64px;font-size:5.5px;color:#ffe;">ON</div>
<div class="a" style="left:686.5px;top:603.6px;width:15.8px;height:14.7px;background:#fff;border-radius:50%;box-shadow:0 0 1px rgba(0,0,0,.4)"></div>
<div class="a" style="left:1155.5px;top:603px;width:48.3px;height:17.3px;background:#f1f1f1;border:1px solid #e6e6e6;border-radius:2px"></div>
<div class="t" style="left:1164.3px;top:608.23px;font-size:8px;color:#333;font-weight:bold">$</div>
<div class="t" style="left:1171.5px;top:608.23px;font-size:8px;color:#555;">Reprice</div>
<div class="a" style="left:1209px;top:603.5px;width:53px;height:16.8px;background:#f35a0f;border-radius:2px"></div>
<svg class="a" style="left:1213.5px;top:607px" width="9" height="9" viewBox="0 0 9 9"><rect x="0.5" y="0.5" width="8" height="8" rx="1" fill="#f9c9a8"/><rect x="2" y="0.5" width="4.5" height="3" fill="#f35a0f"/></svg>
<div class="t" style="left:1224.5px;top:608.23px;font-size:8px;color:#fff1e6;">Save</div>
<svg class="a" style="left:1251px;top:609.5px" width="6" height="5" viewBox="0 0 6 5"><path d="M0.5 0.8h5L3 4.2z" fill="#fde"/></svg>
<!--/MODAL-->
</body></html>
